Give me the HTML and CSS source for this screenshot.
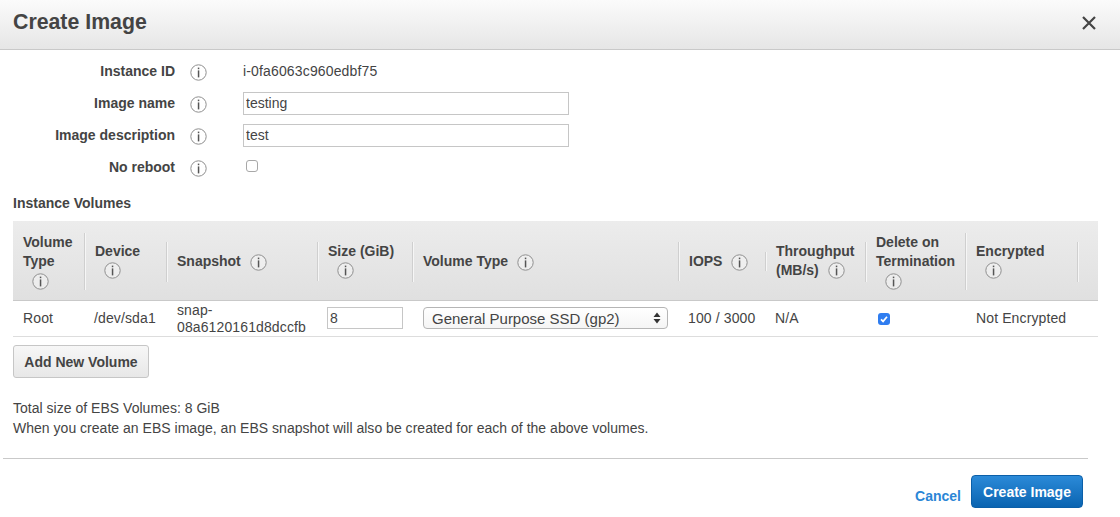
FILE: index.html
```html
<!DOCTYPE html>
<html lang="en">
<head>
    <meta charset="UTF-8">
    <meta name="viewport" content="width=device-width, initial-scale=1.0">
    <title>Create Image</title>
    <link rel="stylesheet" href="styles.css">
</head>
<body>
    <svg class="defs" width="0" height="0">
        <symbol id="info" viewBox="0 0 17 17">
            <circle cx="8.5" cy="8.5" r="7.7" fill="#fff" fill-opacity="0.35" stroke="#8f8f8f" stroke-width="1"/>
            <rect x="7.8" y="3.6" width="1.5" height="1.6" fill="#555"/>
            <rect x="7.8" y="6.4" width="1.5" height="7" fill="#555"/>
        </symbol>
    </svg>

    <div class="modal-header">
        <h1 class="modal-title">Create Image</h1>
        <svg class="close-icon" width="16" height="16" viewBox="0 0 16 16">
            <path d="M2 2 L14 14 M14 2 L2 14" stroke="#444" stroke-width="2.2" fill="none"/>
        </svg>
    </div>

    <div class="form">
        <div class="form-row">
            <div class="form-label">Instance ID</div>
            <svg class="info form-info"><use href="#info"/></svg>
            <div class="form-value">i-0fa6063c960edbf75</div>
        </div>
        <div class="form-row">
            <div class="form-label">Image name</div>
            <svg class="info form-info"><use href="#info"/></svg>
            <input class="text-input" type="text" value="testing">
        </div>
        <div class="form-row">
            <div class="form-label">Image description</div>
            <svg class="info form-info"><use href="#info"/></svg>
            <input class="text-input" type="text" value="test">
        </div>
        <div class="form-row">
            <div class="form-label">No reboot</div>
            <svg class="info form-info"><use href="#info"/></svg>
            <input class="reboot-check" type="checkbox">
        </div>
    </div>

    <h2 class="section-title">Instance Volumes</h2>

    <table class="volumes">
        <thead>
            <tr>
                <th class="col-type"><div class="th-inner th-first">Volume<br>Type<br><svg class="info info-indent"><use href="#info"/></svg></div></th>
                <th class="col-device"><div class="th-inner th-two">Device<br><svg class="info info-indent"><use href="#info"/></svg></div></th>
                <th class="col-snapshot"><div class="th-inner th-tall">Snapshot <svg class="info info-side"><use href="#info"/></svg></div></th>
                <th class="col-size"><div class="th-inner th-two">Size (GiB)<br><svg class="info info-indent"><use href="#info"/></svg></div></th>
                <th class="col-voltype"><div class="th-inner th-tall">Volume Type <svg class="info info-side"><use href="#info"/></svg></div></th>
                <th class="col-iops"><div class="th-inner">IOPS <svg class="info info-side"><use href="#info"/></svg></div></th>
                <th class="col-through"><div class="th-inner th-two">Throughput<br>(MB/s) <svg class="info info-side"><use href="#info"/></svg></div></th>
                <th class="col-delete"><div class="th-inner">Delete on<br>Termination<br><svg class="info info-indent"><use href="#info"/></svg></div></th>
                <th class="col-enc"><div class="th-inner th-two">Encrypted<br><svg class="info info-indent"><use href="#info"/></svg></div></th>
                <th class="col-end"></th>
            </tr>
        </thead>
        <tbody>
            <tr>
                <td>Root</td>
                <td>/dev/sda1</td>
                <td class="snapshot-cell">snap-<br>08a6120161d8dccfb</td>
                <td class="size-cell"><input class="size-input" type="text" value="8"></td>
                <td class="select-cell">
                    <div class="select-box">
                        <span>General Purpose SSD (gp2)</span>
                        <svg width="8" height="12" viewBox="0 0 8 12">
                            <path d="M4 0.5 L7.5 5 H0.5 Z M4 11.5 L0.5 7 H7.5 Z" fill="#333"/>
                        </svg>
                    </div>
                </td>
                <td>100 / 3000</td>
                <td>N/A</td>
                <td class="check-cell">
                    <span class="check-on">
                        <svg width="12" height="12" viewBox="0 0 12 12">
                            <path d="M3 6.3 L5.1 8.4 L9 3.8" stroke="#fff" stroke-width="1.7" fill="none"/>
                        </svg>
                    </span>
                </td>
                <td class="enc-cell" colspan="2">Not Encrypted</td>
            </tr>
        </tbody>
    </table>

    <button class="add-btn">Add New Volume</button>

    <div class="notes">
        <p>Total size of EBS Volumes: 8 GiB</p>
        <p>When you create an EBS image, an EBS snapshot will also be created for each of the above volumes.</p>
    </div>

    <div class="footer">
        <a class="cancel" href="#">Cancel</a>
        <button class="create-btn">Create Image</button>
    </div>
</body>
</html>
```

FILE: styles.css
```css
html, body {
    margin: 0;
    padding: 0;
    height: 517px;
    overflow: hidden;
}
body {
    background-color: #fff;
    color: #444;
    font-family: "Liberation Sans", Arial, sans-serif;
    font-size: 14px;
}
.defs {
    position: absolute;
}
.modal-header {
    height: 49px;
    padding: 0 23px 0 13px;
    display: flex;
    align-items: center;
    justify-content: space-between;
    background: linear-gradient(#fbfbfb, #e6e6e6);
    border-bottom: 1px solid #c9c9c9;
}
.modal-title {
    margin: 0 0 5px 0;
    font-size: 21.3px;
    font-weight: bold;
    color: #444;
}
.close-icon {
    margin-top: -3px;
}
.form {
    padding-top: 5px;
}
.form-row {
    height: 32px;
    display: flex;
    align-items: center;
}
.form-label {
    width: 175px;
    text-align: right;
    font-weight: bold;
    color: #444;
}
.info {
    width: 17px;
    height: 17px;
    vertical-align: middle;
}
.form-info {
    margin: 2px 36px 0 15px;
    flex: none;
}
.form-value {
    margin-bottom: 1px;
    letter-spacing: 0.15px;
    color: #444;
}
.text-input {
    width: 326px;
    height: 23px;
    padding: 0 2px;
    box-sizing: border-box;
    border: 1px solid #c6c6c6;
    border-radius: 0;
    font-family: inherit;
    font-size: 14px;
    color: #444;
}
.reboot-check {
    appearance: none;
    width: 12px;
    height: 12px;
    margin: 0 0 2px 3px;
    border: 1px solid #a8a8a8;
    border-radius: 3px;
    background-color: #fff;
}
.section-title {
    margin: 12px 0 10px 13px;
    font-size: 14px;
    font-weight: bold;
    line-height: 16px;
    color: #444;
}
.volumes {
    width: 1085px;
    margin-left: 13px;
    border-collapse: collapse;
    table-layout: fixed;
}
.volumes th {
    height: 77px;
    padding: 2px 0 0 0;
    text-align: left;
    vertical-align: middle;
    font-size: 14px;
    line-height: 19px;
    color: #444;
    background: linear-gradient(#ececec, #e0e0e0);
    border-bottom: 1px solid #c9c9c9;
}
.th-inner {
    position: relative;
    margin-right: -1px;
    padding-left: 11px;
    border-right: 1px solid #cfcfcf;
    box-shadow: 1px 0 0 #f6f6f6;
}
.th-first {
    padding-left: 10px;
}
.th-two {
    padding-bottom: 2px;
}
.th-tall {
    padding-top: 10px;
    padding-bottom: 10px;
}
.info-indent {
    margin-left: 9px;
}
.info-side {
    margin-left: 5px;
}
.col-type { width: 71px; }
.col-device { width: 82px; }
.col-snapshot { width: 151px; }
.col-size { width: 95px; }
.col-voltype { width: 266px; }
.col-iops { width: 87px; }
.col-through { width: 100px; }
.col-delete { width: 100px; }
.col-enc { width: 112px; }
.volumes td {
    height: 34px;
    padding: 0 0 1px 10px;
    border-bottom: 1px solid #ddd;
    font-size: 14px;
    line-height: 17px;
    letter-spacing: 0.12px;
    color: #444;
}
.volumes .select-cell,
.volumes .enc-cell {
    padding-left: 11px;
}
.volumes .snapshot-cell {
    padding: 0 0 0 11px;
}
.volumes .check-cell {
    padding-left: 13px;
}
.size-input {
    width: 76px;
    height: 22px;
    padding: 0 2px;
    box-sizing: border-box;
    border: 1px solid #c6c6c6;
    font-family: inherit;
    font-size: 14px;
    color: #444;
}
.select-box {
    width: 245px;
    height: 22px;
    padding: 0 6px 0 8px;
    box-sizing: border-box;
    display: flex;
    align-items: center;
    justify-content: space-between;
    border: 1px solid #b5b5b5;
    border-radius: 4px;
    background: linear-gradient(#fff, #f5f5f5);
    font-size: 15px;
    letter-spacing: 0;
}
.check-cell {
    vertical-align: middle;
}
.check-on {
    display: block;
    width: 12px;
    height: 12px;
    margin-top: 1px;
    border-radius: 3px;
    background-color: #2f7df0;
}
.check-on svg {
    display: block;
}
.add-btn {
    display: block;
    width: 136px;
    height: 33px;
    margin: 8px 0 0 13px;
    padding: 0;
    background: linear-gradient(#f7f7f7, #e7e7e7);
    border: 1px solid #c6c6c6;
    border-radius: 3px;
    font-family: inherit;
    font-size: 14px;
    font-weight: bold;
    color: #444;
}
.notes {
    margin: 20px 0 0 13px;
    font-size: 14px;
    line-height: 20px;
    letter-spacing: 0.02px;
}
.notes p {
    margin: 0;
}
.footer {
    width: 1085px;
    margin: 20px 0 0 3px;
    padding-top: 16px;
    border-top: 1px solid #c9c9c9;
    display: flex;
    justify-content: flex-end;
    align-items: flex-end;
}
.cancel {
    margin-bottom: 4px;
    font-size: 14px;
    font-weight: bold;
    color: #2b86d6;
    text-decoration: none;
}
.create-btn {
    width: 112px;
    height: 33px;
    margin: 0 5px 0 10px;
    padding: 0;
    background: linear-gradient(#2b8ad8, #0a64b1);
    border: 1px solid #0b5fa8;
    border-radius: 4px;
    font-family: inherit;
    font-size: 14px;
    font-weight: bold;
    color: #fff;
}
```
